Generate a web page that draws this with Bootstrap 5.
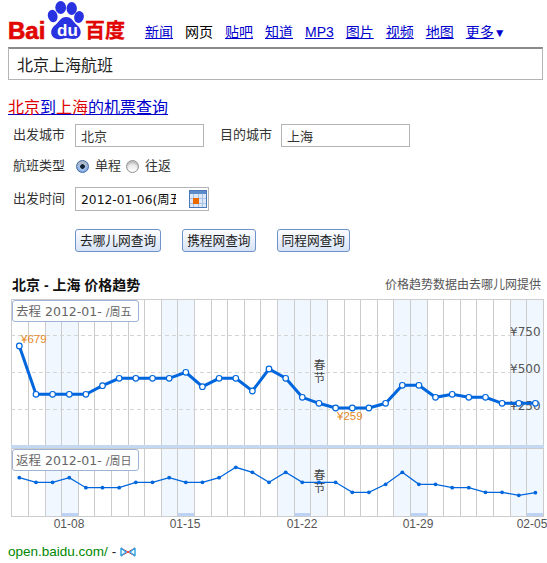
<!DOCTYPE html>
<html lang="zh">
<head>
    <meta charset="UTF-8">
    <title>北京上海航班</title>
    <link href="https://cdn.jsdelivr.net/npm/bootstrap@5.3.0/dist/css/bootstrap.min.css" rel="stylesheet">
    <style>
        body {
            font-family: "Liberation Sans", "Noto Sans CJK SC", sans-serif;
            font-size: 13px;
            color: #333;
            background: #fff;
            overflow: hidden;
        }
        a { color: #00c; }
        .page-wrap { width: 547px; height: 563px; padding: 1px 0 0 8px; }
        .head-logo { width: 122px; height: 42px; display: block; }
        .head-links { font-size: 14px; gap: 12px; margin: 0 0 0 15px; padding-top: 21px; line-height: 20px; }
        .head-links span { color: #000; }
        .head-links .more-arrow { color: #00c; font-size: 12px; text-decoration: none; }
        .search-box {
            width: 535px; height: 33px; margin-top: 4px; padding: 0 8px;
            border: 1px solid #b4b4b4; border-top: 2px solid #8a8a8a;
            border-radius: 0; font-size: 16px; color: #222; box-shadow: none;
        }
        .trip-title { font-size: 16px; line-height: 20px; margin-top: 18px; }
        .trip-title .hit { color: #d00; }
        .form-line { height: 22px; align-items: center; }
        .line-city { margin-top: 6px; }
        .line-type { margin-top: 9px; }
        .line-date { margin-top: 11px; }
        .form-name { width: 62px; margin-left: 5px; margin-right: 0; white-space: nowrap; color: #333; line-height: 22px; }
        .text-field {
            width: 129px; height: 23px; padding: 0 5px; font-size: 13px; color: #333;
            border: 1px solid #b4b4b4; border-radius: 0; box-shadow: none;
        }
        .second-name { margin-left: 16px; width: 61px; }
        .radio-dot {
            width: 13px; height: 13px; margin: 0 6px 0 0; flex: none;
            border: 1px solid #8f8f8f; box-shadow: inset 0 2px 2px #bbb;
            background: linear-gradient(#ddd, #fff);
        }
        .form-name + .radio-dot { margin-left: 1px; }
        .radio-dot:checked {
            border-color: #3f68a8;
            background: radial-gradient(circle, #123 0, #123 2px, #a9c6ee 2.6px, #5f91d6 100%);
        }
        .radio-text { margin-right: 5px; }
        .date-field { width: 134px; height: 24px; border: 1px solid #b4b4b4; }
        .date-field input {
            width: 100px; height: 22px; border: 0; padding: 0 0 0 5px; outline: 0; flex: none;
            font-family: "DejaVu Sans", "Noto Sans CJK SC", sans-serif; font-size: 12.3px; color: #111;
        }
        .date-icon { margin-left: 13px; }
        .btn-row { padding-left: 67px; gap: 21px; margin-top: 19px; }
        .search-btn {
            height: 23px; padding: 0 4px; font-size: 12.7px; line-height: 20px; color: #222; white-space: nowrap;
            border: 1px solid #6f92c8; border-radius: 3px;
            background: linear-gradient(#fdfdff, #d6e3f7);
        }
        .trend-head { width: 533px; margin-top: 23px; height: 20px; line-height: 20px; }
        .trend-head b { font-size: 14px; color: #111; }
        .trend-head span { font-size: 12px; color: #555; }
        .chart-svg { display: block; width: 547px; height: 238px; margin: 3px 0 0 -8px; }
        .chart-svg text { font-family: "Liberation Sans", "Noto Sans CJK SC", sans-serif; }
        .chart-svg .price-scale { font-family: "DejaVu Sans", sans-serif; font-size: 12px; fill: #555; }
        .chart-svg .price-mark { font-size: 11.5px; fill: #e58a1f; }
        .chart-svg .date-mark { font-size: 12px; fill: #555; text-anchor: middle; }
        .chart-svg .holiday { font-size: 11.5px; fill: #444; text-anchor: middle; }
        .chart-svg .legend-text { font-size: 12.5px; fill: #666; font-family: "DejaVu Sans", "Noto Sans CJK SC", sans-serif; }
        .chart-svg .legend-small { font-size: 11px; }
        .foot-line { margin-top: 8px; line-height: 16px; font-size: 13.5px; color: #080; }
    </style>
</head>
<body>
<div class="page-wrap">
    <div class="d-flex">
        <svg class="head-logo" viewBox="8 1 122 42">
            <text x="8" y="38.5" font-family="Liberation Sans" font-weight="700" font-size="24" fill="#e10601" stroke="#e10601" stroke-width=".7">Bai</text>
            <ellipse cx="52.7" cy="16" rx="4.8" ry="6.3" fill="#2932e1" transform="rotate(-15 52.7 16)"/>
            <ellipse cx="60.7" cy="7.5" rx="5.4" ry="6.5" fill="#2932e1"/>
            <ellipse cx="71.7" cy="8.5" rx="5.2" ry="6.5" fill="#2932e1"/>
            <ellipse cx="79" cy="17" rx="4.8" ry="6" fill="#2932e1" transform="rotate(15 79 17)"/>
            <path d="M66 17c6 0 7 5 12 9 5 5 3 13-5 13-3 0-5-1-7-1s-5 2-9 1c-6-1-8-8-3-13 5-3 6-9 12-9z" fill="#2932e1"/>
            <text x="57" y="36" font-family="Liberation Sans" font-weight="700" font-size="17" fill="#fff">du</text>
            <text x="85" y="38" font-family="Noto Sans CJK SC" font-weight="700" font-size="20" fill="#e10601" stroke="#e10601" stroke-width=".3">百度</text>
        </svg>
        <div class="head-links d-flex">
            <a href="#">新闻</a><span>网页</span><a href="#">贴吧</a><a href="#">知道</a><a href="#">MP3</a><a href="#">图片</a><a href="#">视频</a><a href="#">地图</a>
            <div><a href="#">更多</a><span class="more-arrow">▼</span></div>
        </div>
    </div>
    <input class="form-control search-box" type="text" value="北京上海航班">
    <div class="trip-title"><a href="#"><span class="hit">北京</span>到<span class="hit">上海</span>的机票查询</a></div>
    <div class="d-flex form-line line-city">
        <label class="form-name">出发城市</label>
        <input class="form-control text-field" type="text" value="北京">
        <label class="form-name second-name">目的城市</label>
        <input class="form-control text-field" type="text" value="上海">
    </div>
    <div class="d-flex form-line line-type">
        <label class="form-name">航班类型</label>
        <input class="form-check-input radio-dot" type="radio" name="tripType" checked>
        <span class="radio-text">单程</span>
        <input class="form-check-input radio-dot" type="radio" name="tripType">
        <span>往返</span>
    </div>
    <div class="d-flex form-line line-date">
        <label class="form-name">出发时间</label>
        <div class="date-field d-flex align-items-center">
            <input type="text" value="2012-01-06(周五)">
            <svg class="date-icon" width="18" height="18" viewBox="0 0 18 18">
                <rect x=".5" y=".5" width="17" height="17" fill="#dce8f8" stroke="#4a78b8"/>
                <rect x="1" y="1" width="16" height="3" fill="#5d8ccb"/>
                <path d="M4.5 4v13M9.5 4v13M13.5 4v13M1 8.5h16M1 13.5h16" stroke="#a9c3e6"/>
                <rect x="4" y="8" width="6" height="6" fill="#ea6a00"/>
            </svg>
        </div>
    </div>
    <div class="d-flex btn-row">
        <button class="btn search-btn" type="button">去哪儿网查询</button>
        <button class="btn search-btn" type="button">携程网查询</button>
        <button class="btn search-btn" type="button">同程网查询</button>
    </div>
    <div class="trend-head d-flex justify-content-between ps-1">
        <b>北京 - 上海 价格趋势</b>
        <span>价格趋势数据由去哪儿网提供</span>
    </div>
    <svg class="chart-svg" id="chart" viewBox="0 298 547 238"></svg>
    <div class="foot-line d-flex align-items-center">
        <span>open.baidu.com/</span>
        <span class="text-dark mx-1">-</span>
        <svg width="16" height="10" viewBox="0 0 16 10">
            <path d="M1 1l7 4 7-4M1 9l7-4 7 4" fill="none" stroke="#e03030"/>
            <path d="M1 1v8M15 1v8M1 1l5 4-5 4M15 1l-5 4 5 4" fill="none" stroke="#29a3e8" stroke-width="1.4"/>
        </svg>
    </div>
</div>
<script>
    const goPrices = [346,394.3,394.3,394.3,394.3,385.7,378.3,378.3,378.3,378.3,372.3,386.7,378.3,378.3,391,369,378.3,397.3,403.3,408,408,408,403.3,385.3,385.3,397.3,394.3,397.3,397.3,403.3,403.3,403.3];
    const backPrices = [477.7,482.3,482.3,477.7,487.7,487.7,487.7,482.3,482.3,477.7,482.3,482.3,477.7,467.3,472.3,482.3,472.3,482.3,482.3,482.3,492.3,492.3,484.3,472.3,484.3,484.3,487.7,487.7,492.3,492.3,495.3,492.7];
    const blueCols = [2,3,9,10,16,17,18,23,24,30,31];
    const darkCols = [3,10,17,24,31];

    const colX = i => Math.round(11.3 + 16.61 * i);
    const ptX = i => 19.3 + 16.65 * i;
    let out = '';

    // weekend columns
    blueCols.forEach(c => {
        out += `<rect x="${colX(c)}" y="300" width="${colX(c + 1) - colX(c)}" height="216" fill="#f0f7ff"/>`;
    });
    darkCols.forEach(c => {
        out += `<rect x="${colX(c)}" y="513" width="${colX(c + 1) - colX(c)}" height="3" fill="#bcd3f5"/>`;
    });

    // grid
    for (let i = 0; i <= 32; i++) {
        out += `<path d="M${colX(i) + .5} 299V517" stroke="#ccc"/>`;
    }
    [335.5, 372.5, 409.5].forEach(y => {
        out += `<path d="M11 ${y}H543" stroke="#d4d4d4" stroke-dasharray="4 3"/>`;
    });
    out += '<path d="M11 299.5H544M11 516.5H544" stroke="#ccc"/>';
    out += '<rect x="11" y="445" width="533" height="3" fill="#c5d8f2"/><path d="M11 448.5H544" stroke="#ccc"/>';

    // price scale sits under the line
    out += '<text class="price-scale" x="510" y="336">¥750</text><text class="price-scale" x="510" y="373">¥500</text><text class="price-scale" x="510" y="410">¥250</text>';
    out += '<text class="holiday" x="319.5" y="369">春</text><text class="holiday" x="319.5" y="382">节</text>';
    out += '<text class="holiday" x="319.5" y="479">春</text><text class="holiday" x="319.5" y="492">节</text>';

    // lines
    const toLine = arr => arr.map((y, i) => ptX(i).toFixed(1) + ',' + y).join(' ');
    out += `<polyline points="${toLine(goPrices)}" fill="none" stroke="#0066dd" stroke-width="3"/>`;
    goPrices.forEach((y, i) => {
        out += `<circle cx="${ptX(i).toFixed(1)}" cy="${y}" r="2.8" fill="#fff" stroke="#0066dd" stroke-width="1.2"/>`;
    });
    out += `<polyline points="${toLine(backPrices)}" fill="none" stroke="#0066dd" stroke-width="1.3"/>`;
    backPrices.forEach((y, i) => {
        out += `<circle cx="${ptX(i).toFixed(1)}" cy="${y}" r="1.9" fill="#0066dd"/>`;
    });

    out += '<text class="price-mark" x="21" y="343">¥679</text><text class="price-mark" x="337" y="420">¥259</text>';

    // legends
    [[300.5, 316, '去程', '周五'], [449.5, 465, '返程', '周日']].forEach(l => {
        out += `<rect x="12.5" y="${l[0]}" width="126" height="21" rx="2.5" fill="#fff" stroke="#9db3d4"/>`;
        out += `<text class="legend-text" x="16" y="${l[1]}">${l[2]} 2012-01- <tspan class="legend-small">/${l[3]}</tspan></text>`;
    });

    // date axis
    [[69, '01-08'], [185, '01-15'], [302, '01-22'], [418, '01-29'], [532, '02-05']].forEach(d => {
        out += `<text class="date-mark" x="${d[0]}" y="528">${d[1]}</text>`;
    });

    document.getElementById('chart').innerHTML = out;
</script>
<script src="https://cdn.jsdelivr.net/npm/bootstrap@5.3.0/dist/js/bootstrap.bundle.min.js"></script>
</body>
</html>
